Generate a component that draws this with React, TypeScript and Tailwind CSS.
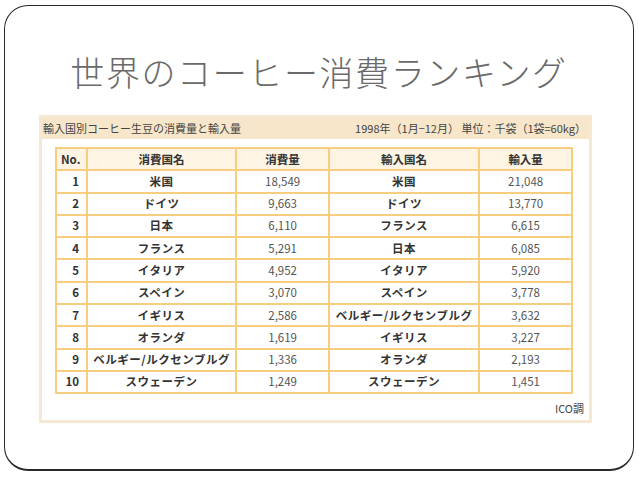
const rows = [
  { no: 1, c1: "米国", v1: "18,549", c2: "米国", v2: "21,048" },
  { no: 2, c1: "ドイツ", v1: "9,663", c2: "ドイツ", v2: "13,770" },
  { no: 3, c1: "日本", v1: "6,110", c2: "フランス", v2: "6,615" },
  { no: 4, c1: "フランス", v1: "5,291", c2: "日本", v2: "6,085" },
  { no: 5, c1: "イタリア", v1: "4,952", c2: "イタリア", v2: "5,920" },
  { no: 6, c1: "スペイン", v1: "3,070", c2: "スペイン", v2: "3,778" },
  { no: 7, c1: "イギリス", v1: "2,586", c2: "ベルギー/ルクセンブルグ", v2: "3,632" },
  { no: 8, c1: "オランダ", v1: "1,619", c2: "イギリス", v2: "3,227" },
  { no: 9, c1: "ベルギー/ルクセンブルグ", v1: "1,336", c2: "オランダ", v2: "2,193" },
  { no: 10, c1: "スウェーデン", v1: "1,249", c2: "スウェーデン", v2: "1,451" },
];

const font = "font-['Noto_Sans_CJK_JP','Noto_Sans',sans-serif]";
const cell = "border-2 border-[#f7cd7e] p-0 h-[22.3px]";

export default function App() {
  return (
    <div className={`w-[638px] h-[479px] bg-white pt-[5px] pl-[4px] ${font}`}>
      <div className="w-[630px] h-[466px] rounded-[24px] border border-[#2a2a2a] border-b-2 flex flex-col">
        {/* Title */}
        <div className="h-[109px] pt-[23px] flex items-center justify-center">
          <h1 className="text-[34px] leading-none text-[#6a6a6a] tracking-[1.6px] font-light">
            世界のコーヒー消費ランキング
          </h1>
        </div>

        {/* Table box */}
        <div className="ml-[34px] w-[553px] h-[308px] border-[3px] border-[#f6e9d4] flex flex-col">
          <div className="h-[21px] bg-[#f7e6c9] flex items-center justify-between pl-[1px] pr-[3px] text-[11px] text-[#444]">
            <span>輸入国別コーヒー生豆の消費量と輸入量</span>
            <span>1998年（1月−12月） 単位：千袋（1袋=60kg）</span>
          </div>
          <div className="pl-[13px] pt-[8px]">
            <table className="border-collapse w-[518px] text-[11.5px] text-[#333]">
              <colgroup>
                <col className="w-[31px]" />
                <col className="w-[150px]" />
                <col className="w-[93px]" />
                <col className="w-[151px]" />
                <col className="w-[93px]" />
              </colgroup>
              <thead>
                <tr className="bg-[#fdf4e4] font-bold">
                  <th className={`${cell} text-left pl-[4px]`}>No.</th>
                  <th className={cell}>消費国名</th>
                  <th className={cell}>消費量</th>
                  <th className={cell}>輸入国名</th>
                  <th className={cell}>輸入量</th>
                </tr>
              </thead>
              <tbody>
                {rows.map((r) => (
                  <tr key={r.no}>
                    <td className={`${cell} text-right pr-[7px] font-bold`}>{r.no}</td>
                    <td className={`${cell} text-center font-bold tracking-[0.5px]`}>{r.c1}</td>
                    <td className={`${cell} text-center text-[#555]`}>{r.v1}</td>
                    <td className={`${cell} text-center font-bold tracking-[0.5px]`}>{r.c2}</td>
                    <td className={`${cell} text-center text-[#555]`}>{r.v2}</td>
                  </tr>
                ))}
              </tbody>
            </table>
          </div>
          <div className="flex-1 flex items-end justify-end pr-[5px] pb-[4px] text-[11px] text-[#444]">
            ICO調
          </div>
        </div>
      </div>
    </div>
  );
}
